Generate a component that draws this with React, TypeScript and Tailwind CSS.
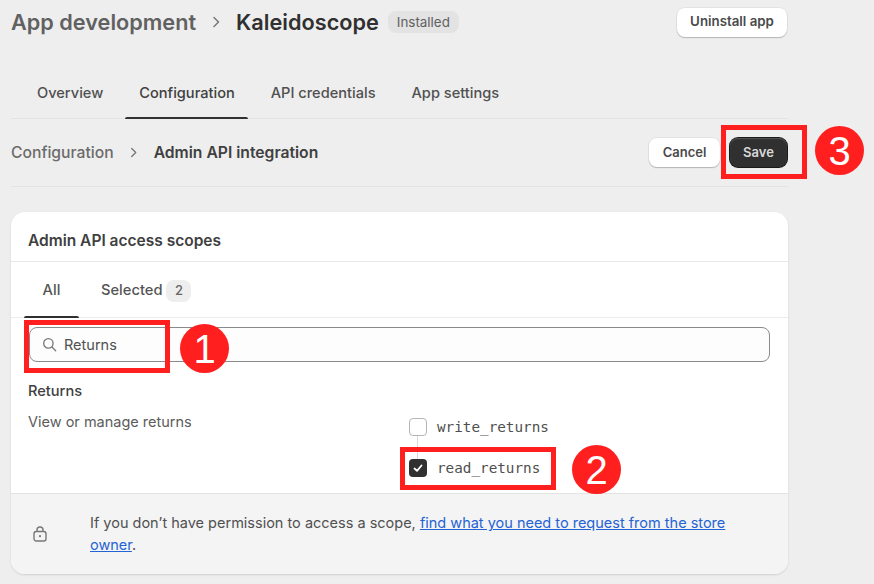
import React from "react";

function Chevron({ className }: { className?: string }) {
  return (
    <svg className={className} viewBox="0 0 10 14" fill="none" stroke="currentColor" strokeWidth="1.5" strokeLinecap="round" strokeLinejoin="round">
      <path d="M3 2.5 7.5 7 3 11.5" />
    </svg>
  );
}

function Marker({ n, className }: { n: string; className: string }) {
  return (
    <div className={`absolute w-[49px] h-[49px] rounded-full bg-[#ff1f1f] text-white flex items-center justify-center text-[40px] leading-none font-['Liberation_Sans',sans-serif] ${className}`}>
      {n}
    </div>
  );
}

function Box({ className }: { className: string }) {
  return <div className={`absolute border-[5px] border-[#ff1f1f] ${className}`} />;
}

export default function App() {
  return (
    <div className="relative w-[874px] h-[584px] overflow-hidden bg-[#eeeeee] pl-[11px] font-['Inter',sans-serif] text-[#303030]">
      <div className="w-[777px]">
        <div className="h-[44px] flex items-center">
          <span className="text-[21.7px] font-semibold text-[#616161] leading-none pt-px">App development</span>
          <Chevron className="w-[10px] h-[14px] ml-[15px] mr-[15px] text-[#777777]" />
          <span className="text-[21.7px] font-semibold text-[#303030] leading-none pt-px">Kaleidoscope</span>
          <span className="ml-[9px] h-[22px] w-[71px] justify-center rounded-[8px] bg-[#e3e3e3] text-[13.4px] text-[#616161] flex items-center">Installed</span>
          <button className="ml-auto mr-px h-[29px] w-[110px] rounded-[8px] bg-white text-[13.3px] font-semibold text-[#4a4a4a] shadow-[0_1px_1px_#b5b5b5,0_0_0_1px_#e3e3e3]">Uninstall app</button>
        </div>

        <div className="mt-[30px] h-[45px] flex gap-[36px] pl-[26px] border-b border-[#e3e3e3] text-[14.6px] font-medium text-[#505050]">
          <div className="pt-[9px]">Overview</div>
          <div className="relative pt-[9px] text-[#404040]">
            Configuration
            <div className="absolute left-[-14px] right-[-13px] bottom-[-1px] h-[2px] bg-[#303030] rounded-t-sm" />
          </div>
          <div className="pt-[9px]">API credentials</div>
          <div className="pt-[9px]">App settings</div>
        </div>

        <div className="h-[68px] flex items-center border-b border-[#e3e3e3] text-[15.7px]">
          <span className="font-medium text-[#6b6b6b]">Configuration</span>
          <Chevron className="w-[9px] h-[13px] ml-[15px] mr-[16px] text-[#777777]" />
          <span className="font-semibold text-[#404040]">Admin API integration</span>
          <div className="ml-auto flex items-center gap-[10px]">
            <button className="h-[29px] w-[71px] rounded-[8px] bg-white text-[13px] font-semibold text-[#4a4a4a] shadow-[0_1px_1px_#b5b5b5,0_0_0_1px_#e3e3e3]">Cancel</button>
            <button className="h-[29px] w-[57px] mr-px rounded-[8px] bg-[#303030] text-[13px] font-semibold text-[#d8d8d8] shadow-[inset_0_1px_1px_#555555,0_0_0_1px_#1a1a1a]">Save</button>
          </div>
        </div>

        <div className="mt-[25px] h-[362px] rounded-[14px] bg-white shadow-[0_1px_2px_#cfcfcf] overflow-hidden flex flex-col">
          <div className="h-[50px] flex items-center px-[17px] pt-[9px] border-b border-[#e8e8e8] text-[15.5px] font-semibold text-[#404040]">
            Admin API access scopes
          </div>
          <div className="h-[56px] flex pl-[13px] border-b border-[#ececec] text-[14.7px] font-medium text-[#555555]">
            <div className="relative w-[55px] pt-[2px] flex items-center justify-center">
              All
              <div className="absolute left-0 right-0 bottom-[-1px] h-[2px] bg-[#303030] rounded-t-sm" />
            </div>
            <div className="ml-[22px] pt-[2px] flex items-center">
              Selected
              <span className="ml-[4px] w-[25px] h-[22px] rounded-[8px] bg-[#eeeeee] flex items-center justify-center text-[13px] text-[#666666]">2</span>
            </div>
          </div>
          <div className="mx-[18px] mt-[9px] h-[35px] rounded-[8px] border border-[#8a8a8a] bg-[#fdfdfd] flex items-center pl-[12px] text-[14.5px] text-[#505050]">
            <svg className="w-[15px] h-[15px] text-[#777777]" viewBox="0 0 16 16" fill="none" stroke="currentColor" strokeWidth="1.4" strokeLinecap="round">
              <circle cx="6.8" cy="6.8" r="5" />
              <path d="m10.6 10.6 4 4" />
            </svg>
            <span className="ml-[7px]">Returns</span>
          </div>
          <div className="flex-1 relative px-[17px]">
            <div className="mt-[21px] text-[14.6px] font-medium text-[#404040] leading-[17px]">Returns</div>
            <div className="mt-[13px] text-[14.5px] text-[#5c5c5c] leading-[17px]">View or manage returns</div>
            <div className="absolute left-[398px] top-[56px] font-['DejaVu_Sans_Mono',monospace] text-[14.3px] text-[#4f4f4f]">
              <div className="flex items-center h-[18px]">
                <span className="w-[18px] h-[18px] rounded-[4px] border border-[#b5b5b5] bg-white" />
                <span className="ml-[10px] pt-px">write_returns</span>
              </div>
              <div className="ml-[8px] w-px h-[23px] bg-[#d8d8d8]" />
              <div className="flex items-center h-[18px]">
                <span className="w-[18px] h-[18px] rounded-[4px] bg-[#303030] flex items-center justify-center">
                  <svg className="w-[12px] h-[12px]" viewBox="0 0 12 12" fill="none" stroke="white" strokeWidth="1.8" strokeLinecap="round" strokeLinejoin="round">
                    <path d="m2.5 6.5 2.5 2.3 4.5-5.3" />
                  </svg>
                </span>
                <span className="ml-[10px] pt-px">read_returns</span>
              </div>
            </div>
          </div>
          <div className="h-[81px] bg-[#f4f4f4] border-t border-[#e3e3e3] flex items-center pl-[22px] pr-[50px] text-[14.5px] text-[#505050] leading-[22px]">
            <svg className="w-[14px] h-[16px] shrink-0 text-[#777777]" viewBox="0 0 14 16" fill="none" stroke="currentColor" strokeWidth="1.4">
              <rect x="1" y="5.5" width="12" height="9.5" rx="2.2" />
              <path d="M4 5.5V4a3 3 0 0 1 6 0v1.5" />
              <circle cx="7" cy="10.2" r="1.1" fill="currentColor" stroke="none" />
            </svg>
            <p className="ml-[43px]">
              If you don’t have permission to access a scope,{" "}
              <a className="text-[#2463d4] underline">find what you need to request from the store owner</a>.
            </p>
          </div>
        </div>
      </div>

      <Box className="left-[721px] top-[125px] w-[86px] h-[54px]" />
      <Marker n="3" className="left-[815px] top-[126px]" />
      <Box className="left-[24px] top-[320px] w-[146px] h-[53px]" />
      <Marker n="1" className="left-[180px] top-[324px]" />
      <Box className="left-[400px] top-[447px] w-[156px] h-[43px]" />
      <Marker n="2" className="left-[572px] top-[445px]" />
    </div>
  );
}
